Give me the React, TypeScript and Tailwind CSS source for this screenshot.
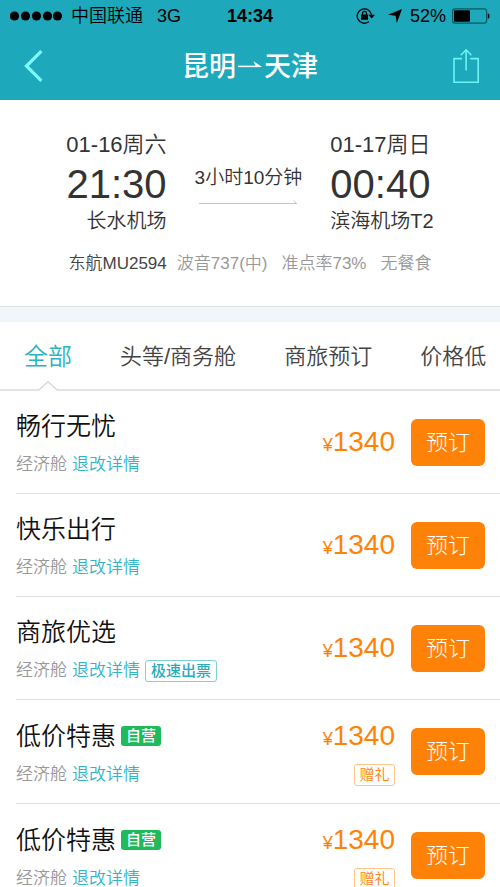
import type { ReactNode } from 'react';

type Fare = {
  name: string;
  price: number;
  fastTicket?: boolean;
  selfRun?: boolean;
  gift?: boolean;
};

const fares: Fare[] = [
  { name: '畅行无忧', price: 1340 },
  { name: '快乐出行', price: 1340 },
  { name: '商旅优选', price: 1340, fastTicket: true },
  { name: '低价特惠', price: 1340, selfRun: true, gift: true },
  { name: '低价特惠', price: 1340, selfRun: true, gift: true },
];

const tabs = ['全部', '头等/商务舱', '商旅预订', '价格低'];

function StatusBar() {
  return (
    <div className="grid h-8 grid-cols-[1fr_auto_1fr] items-center px-2.5 text-lg leading-8 text-black">
      <div className="flex items-center gap-2">
        <svg className="h-3 w-[53px]" viewBox="0 0 53 12">
          {[5, 16, 27, 38, 48].map((cx) => (
            <circle key={cx} cx={cx - 0.5} cy="6" r="4.6" />
          ))}
        </svg>
        <span>中国联通</span>
        <span className="pl-1.5">3G</span>
      </div>
      <span className="font-bold">14:34</span>
      <div className="flex items-center justify-end">
        <svg className="mr-3 h-[18px] w-5" viewBox="0 0 20 18" fill="none">
          <path d="M13 14.6A7.2 7.2 0 1 1 15.6 8.6" stroke="black" strokeWidth="1.3" />
          <path d="M12.4 7.8h6.6l-3.3 3.8z" fill="black" />
          <rect x="5" y="7.6" width="7" height="5.2" rx="0.5" fill="black" />
          <path d="M6.5 8V6.4a2 2 0 0 1 4 0V8" stroke="black" strokeWidth="1.2" />
        </svg>
        <svg className="mr-2 h-3.5 w-3.5" viewBox="0 0 14 14">
          <path d="M14 0 8.8 14 7.6 6.8 0 5.8z" />
        </svg>
        <span className="mr-1.5">52%</span>
        <svg className="h-4 w-[38px]" viewBox="0 0 38 16" fill="none">
          <rect x="0.6" y="0.8" width="34" height="14.4" rx="2.4" stroke="#075a66" strokeWidth="1.2" />
          <rect x="2" y="2.2" width="16" height="11.6" rx="1" fill="black" />
          <path d="M35.8 5.2c2.4.6 2.4 5 0 5.6z" fill="black" />
        </svg>
      </div>
    </div>
  );
}

function NavBar() {
  return (
    <div className="flex h-[68px] items-center justify-between px-5">
      <button type="button" aria-label="返回" className="flex w-8 pl-1">
        <svg className="h-8 w-5" viewBox="0 0 20 32" fill="none" stroke="#7ffafc" strokeWidth="3.2">
          <path d="M17.4 1.2 2.4 16l15 14.8" />
        </svg>
      </button>
      <h1 className="flex items-center gap-0.5 pt-0.5 text-[27px] leading-10 font-medium text-white">
        昆明
        <svg className="h-3 w-6" viewBox="0 0 24 12" fill="none" stroke="white" strokeWidth="1.5">
          <path d="M0 5.4h22" />
          <path d="M15.5.2 24 6.1h-6z" fill="white" stroke="none" />
        </svg>
        天津
      </h1>
      <button type="button" aria-label="分享" className="flex w-8 justify-end">
        <svg className="h-9 w-7" viewBox="0 0 28 36" fill="none" stroke="#6df3f5" strokeWidth="1.6">
          <path d="M10 10.6H2v23.6h24.2V10.6h-8" />
          <path d="M14.1 22.4V2.2M8.8 7.2l5.3-5.4 5.3 5.4" />
        </svg>
      </button>
    </div>
  );
}

function FlightSummary() {
  return (
    <section className="border-b border-[#dfe2e4] px-4 pt-7 pb-[30px]">
      <div className="flex justify-center gap-7 text-[#333]">
        <div className="text-right">
          <p className="text-[22px] leading-[34px]">01-16周六</p>
          <p className="text-[40px] leading-[44px]">21:30</p>
          <p className="text-xl leading-[30px]">长水机场</p>
        </div>
        <div className="flex flex-col items-center gap-2 pt-9">
          <p className="text-[19px] leading-7">3小时10分钟</p>
          <svg className="h-1 w-[98px]" viewBox="0 0 98 4" fill="none" stroke="#c4c4c4">
            <path d="M0 3.5h98M94.5.5l3 3" />
          </svg>
        </div>
        <div>
          <p className="text-[22px] leading-[34px]">01-17周日</p>
          <p className="text-[40px] leading-[44px]">00:40</p>
          <p className="text-xl leading-[30px]">滨海机场T2</p>
        </div>
      </div>
      <div className="mt-4 flex justify-center gap-3.5 text-[17px] leading-6 text-[#999]">
        <div className="flex gap-2.5">
          <span className="text-[#444]">东航MU2594</span>
          <span>波音737(中)</span>
        </div>
        <span>准点率73%</span>
        <span>无餐食</span>
      </div>
    </section>
  );
}

function TabBar() {
  return (
    <div role="tablist" className="flex h-[69px] shrink-0 gap-12 border-b-2 border-[#e4e4e4] pl-6">
      {tabs.map((tab, i) => (
        <button
          key={tab}
          type="button"
          role="tab"
          aria-selected={i === 0}
          className={
            i === 0
              ? 'relative shrink-0 pt-0.5 text-2xl text-[#2ab3c4]'
              : 'shrink-0 pt-0.5 text-[22px] text-[#444]'
          }
        >
          {tab}
          {i === 0 && (
            <svg className="absolute -bottom-0.5 left-3.5 h-2.5 w-5" viewBox="0 0 20 10">
              <path d="M0 10 10 .8 20 10z" fill="white" />
              <path d="M.5 9.4 10 .8l9.5 8.6" fill="none" stroke="#d2d2d2" strokeWidth="1.2" />
            </svg>
          )}
        </button>
      ))}
    </div>
  );
}

function Tag({ className, children }: { className: string; children: ReactNode }) {
  return <span className={`rounded-[3px] text-center ${className}`}>{children}</span>;
}

function FareRow({ fare }: { fare: Fare }) {
  return (
    <li
      className={`ml-4 flex items-center border-b border-[#dde2e3] pr-[15px] ${fare.gift ? 'h-[104px]' : 'h-[103px]'}`}
    >
      <div className="flex-1 pt-1.5">
        <div className="flex items-center gap-[5px]">
          <h2 className="text-[25px] leading-10 text-[#111]">{fare.name}</h2>
          {fare.selfRun && (
            <Tag className="w-10 bg-[#1fba5c] text-[15px] leading-5 font-medium text-white">自营</Tag>
          )}
        </div>
        <div className="flex h-[38px] items-center gap-[5px] text-[17px]">
          <span className="text-[#999]">经济舱</span>
          <a href="#rules" className="text-[#33b3c4]">
            退改详情
          </a>
          {fare.fastTicket && (
            <Tag className="w-[72px] border border-[#7fd0da] text-[15px] leading-5 font-medium text-[#2aaabb]">
              极速出票
            </Tag>
          )}
        </div>
      </div>
      <div className="flex flex-col items-end text-[#ff8208]">
        <p className={`text-[28px] leading-10 ${fare.gift ? 'pt-1.5' : ''}`}>
          <span className="text-lg">¥</span>
          {fare.price}
        </p>
        {fare.gift && (
          <div className="flex h-[38px] items-center">
            <Tag className="w-[41px] border border-[#ffc58a] text-[15px] leading-5">赠礼</Tag>
          </div>
        )}
      </div>
      <button
        type="button"
        className="ml-4 h-[47px] w-[74px] rounded-md bg-[#ff8208] text-[22px] font-light text-white"
      >
        预订
      </button>
    </li>
  );
}

export default function App() {
  return (
    <div className="flex h-screen flex-col bg-white font-['Liberation_Sans','Noto_Sans_CJK_SC',sans-serif] font-[350]">
      <header className="shrink-0 bg-[#1da8bb]">
        <StatusBar />
        <NavBar />
      </header>
      <main className="flex-1 overflow-x-hidden overflow-y-auto [scrollbar-width:none]">
        <FlightSummary />
        <div className="h-[15px] bg-[#f1f6fa]" />
        <TabBar />
        <ul>
          {fares.map((fare, i) => (
            <FareRow key={i} fare={fare} />
          ))}
        </ul>
      </main>
    </div>
  );
}
